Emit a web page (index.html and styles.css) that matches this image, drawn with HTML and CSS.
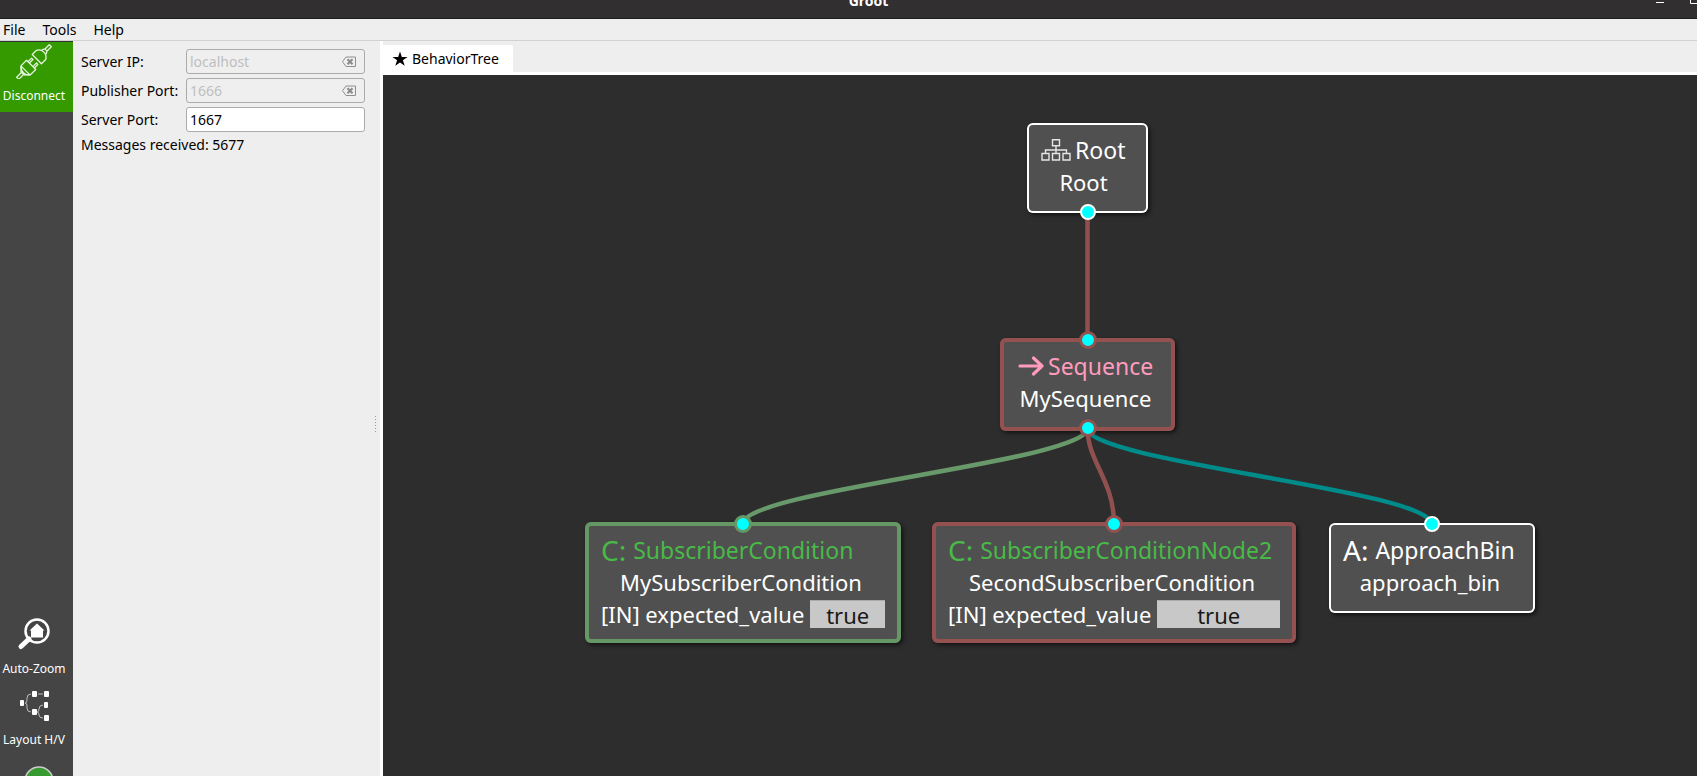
FILE: index.html
```html
<!DOCTYPE html>
<html lang="en">
<head>
<meta charset="utf-8">
<title>Groot</title>
<link rel="stylesheet" href="styles.css">
</head>
<body>
<div class="window">
  <header class="titlebar">
    <span class="titlebar-name">Groot</span>
    <svg class="window-controls" width="43" height="18" viewBox="0 0 43 18" fill="none" stroke="#fff"><path d="M2 2.500h8" /><path d="M36.500 0v3.500H43" /></svg>
  </header>
  <nav class="menubar">
    <button class="menu" type="button">File</button>
    <button class="menu" type="button">Tools</button>
    <button class="menu" type="button">Help</button>
  </nav>
  <div class="workspace">
    <aside class="toolbar">
      <button class="tool tool-active" type="button">
        <svg width="36" height="36" viewBox="0 0 36 36" fill="none" stroke="#e4f5dc" stroke-width="1.300" stroke-linejoin="round">
          <g transform="translate(18 19) rotate(-45)">
            <path d="M-23-1.500h7v3h-7z" /><path d="M-16-2.500l4-3v11l-4-3z" /><path d="M-12-6.500h8v13h-8q-3-2-3-6.500t3-6.500z" />
            <path d="M-4-4.500h5v2h-5M-4 2.500h5v2h-5" />
            <path d="M4-6.500h6q4 2 4 6.500t-4 6.500h-6z" /><path d="M14-3l3 1.500v3L14 3M17-1.500h6v3h-6z" />
          </g>
        </svg>
        <span>Disconnect</span>
      </button>
      <div class="toolbar-bottom">
        <button class="tool" type="button">
          <svg width="34" height="34" viewBox="0 0 34 34"><circle cx="20" cy="14" r="11.500" fill="none" stroke="#fff" stroke-width="2.500" /><path d="M12 22L4 29.500" stroke="#fff" stroke-width="5" stroke-linecap="round" /><path d="M20 6.500l7.500 7h-1.500v7H14v-7h-1.500z" fill="#fff" /></svg>
          <span>Auto-Zoom</span>
        </button>
        <button class="tool" type="button">
          <svg width="34" height="34" viewBox="0 0 34 34"><g fill="#fff"><rect x="3" y="12" width="4" height="6" rx="1" /><rect x="15" y="3" width="5" height="6" rx="1" /><rect x="27" y="3" width="5" height="6" rx="1" /><rect x="15" y="21" width="5" height="6" rx="1" /><rect x="27" y="14" width="4" height="6" rx="1" /><rect x="27" y="27" width="5" height="6" rx="1" /></g><path d="M14 6q-4 0-4 4v2q0 3-2 3q2 0 2 3v2q0 4 4 4M21 6h5M26 17q-4 0-4 4q0 3-2 3q2 0 2 3q0 3 4 3" fill="none" stroke="#bbb" /></svg>
          <span>Layout H/V</span>
        </button>
        <button class="tool tool-clipped" type="button" aria-label="Status">
          <svg width="30" height="10" viewBox="0 0 30 10"><circle cx="15" cy="15" r="14" fill="#379b31" stroke="#ccc" stroke-width="1.500" /></svg>
        </button>
      </div>
    </aside>
    <section class="side">
      <form class="settings">
        <label for="ip">Server IP:</label>
        <div class="field field-off"><input id="ip" value="localhost" disabled><svg width="16" height="12" viewBox="0 0 16 12"><path d="M5 1h9.500v9.500H5L1.500 5.700z" fill="none" stroke="#8f8f8f" /><path d="M6.500 3.200l5 5M11.500 3.200l-5 5" stroke="#8a8a8a" stroke-width="2" /></svg></div>
        <label for="pub">Publisher Port:</label>
        <div class="field field-off"><input id="pub" value="1666" disabled><svg width="16" height="12" viewBox="0 0 16 12"><path d="M5 1h9.500v9.500H5L1.500 5.700z" fill="none" stroke="#8f8f8f" /><path d="M6.500 3.200l5 5M11.500 3.200l-5 5" stroke="#8a8a8a" stroke-width="2" /></svg></div>
        <label for="port">Server Port:</label>
        <div class="field"><input id="port" value="1667"></div>
      </form>
      <p class="messages">Messages received: 5677</p>
      <div class="splitter"></div>
    </section>
    <main class="editor">
      <div class="tabs">
        <button class="tab" type="button"><svg width="16" height="16" viewBox="0 0 16 16"><path d="M8 .500l1.800 5.400h5.700l-4.600 3.400 1.800 5.500L8 11.400l-4.700 3.400 1.800-5.500L.500 5.900h5.700z" /></svg><span>BehaviorTree</span></button>
      </div>
      <div class="canvas">
        <svg class="edges" width="1314" height="701" viewBox="383 75 1314 701" fill="none" stroke-width="4.500">
          <path d="M1087.500 212V340" stroke="#915050" />
          <path d="M1087.500 428C1087.500 462 743 490 743 524" stroke="#68996a" />
          <path d="M1087.500 428C1087.500 462 1431 490 1431 524" stroke="#008b8b" />
          <path d="M1087.500 428C1087.500 462 1114 480 1114 524" stroke="#915050" />
        </svg>
        <article class="node node-plain node-root">
          <h2 class="node-title"><svg width="30" height="24" viewBox="0 0 30 24" fill="none" stroke="#e6e6e6" stroke-width="1.400"><path d="M11.500 1.700h7v6h-7zM1 15.500h7v6.500H1zM11.500 15.500h7v6.500h-7zM22 15.500h7v6.500h-7zM15 7.700v7.800M4.500 15.500v-3.500h21v3.500" /></svg><span>Root</span></h2>
          <p class="node-name">Root</p>
          <i class="port port-out"></i>
        </article>
        <article class="node node-sequence failed">
          <h2 class="node-title"><svg width="26" height="20" viewBox="0 0 26 20" fill="none" stroke="#ff9bbd" stroke-width="3.200" stroke-linecap="round" stroke-linejoin="round"><path d="M2 10h22M15.500 2l8.500 8-8.500 8" /></svg><span>Sequence</span></h2>
          <p class="node-name">MySequence</p>
          <i class="port port-in"></i><i class="port port-out"></i>
        </article>
        <article class="node node-first passed">
          <h2 class="node-title"><b>C:</b><span>SubscriberCondition</span></h2>
          <p class="node-name">MySubscriberCondition</p>
          <div class="param"><label for="v1">[IN] expected_value</label><input id="v1" value="true"></div>
          <i class="port port-in"></i>
        </article>
        <article class="node node-second failed">
          <h2 class="node-title"><b>C:</b><span>SubscriberConditionNode2</span></h2>
          <p class="node-name">SecondSubscriberCondition</p>
          <div class="param"><label for="v2">[IN] expected_value</label><input id="v2" value="true"></div>
          <i class="port port-in"></i>
        </article>
        <article class="node node-plain node-approach">
          <h2 class="node-title"><b>A:</b><span>ApproachBin</span></h2>
          <p class="node-name">approach_bin</p>
          <i class="port port-in"></i>
        </article>
      </div>
    </main>
  </div>
</div>
</body>
</html>
```
FILE: styles.css
```css
* { box-sizing: border-box; }
body { margin: 0; font-family: "Noto Sans", sans-serif; font-size: 14px; color: #000; background: #eee; }
button, input { font: inherit; color: inherit; }
button { border: 0; padding: 0; background: none; }
svg { display: block; flex: none; }
h2, p { margin: 0; font-weight: 400; }

.window { height: 100vh; display: flex; flex-direction: column; overflow: hidden; }
.titlebar { height: 19px; flex: none; display: flex; justify-content: flex-end; position: relative; background: #312f30; border-bottom: 1px solid #1c1c1c; }
.titlebar-name { position: absolute; left: 40px; right: 0; top: -9px; text-align: center; line-height: 20px; font-weight: 700; color: #fff; }
.menubar { height: 22px; flex: none; display: flex; gap: 17px; padding: 0 3px; border-bottom: 1px solid #d2d2d2; }
.menu { line-height: 20px; }
.workspace { flex: 1; min-height: 0; display: flex; }

.toolbar { width: 73px; flex: none; display: flex; flex-direction: column; justify-content: space-between; background: #454545; border-top: 1px solid #333; color: #fff; font-size: 12px; }
.tool { width: 100%; height: 71px; display: flex; flex-direction: column; align-items: center; gap: 10px; padding: 1px 5px 0 0; line-height: 16px; white-space: nowrap; }
.tool-active { height: 70px; gap: 9px; background: #349a00; }
.toolbar-bottom { flex: none; }
.tool-clipped { height: 18px; padding: 8px 0 0 4px; }

.side { width: 307px; flex: none; position: relative; padding: 8px 15px 0 8px; }
.settings { display: grid; grid-template-columns: 99px minmax(0, 1fr); column-gap: 6px; row-gap: 4px; align-items: center; white-space: nowrap; }
.field { height: 25px; display: flex; align-items: center; padding: 0 7px 0 3px; background: #fff; border: 1px solid #ababab; border-radius: 3px; }
.field input { flex: 1; width: 0; min-width: 0; border: 0; padding: 0; background: none; outline: 0; }
.field-off { background: #efefef; }
.field-off input { color: #bebebe; }
.messages { line-height: 20px; margin-top: 3px; }
.splitter { position: absolute; right: 4px; top: 375px; width: 1px; height: 17px; background: repeating-linear-gradient(#999 0 1px, transparent 1px 3px); }

.editor { flex: 1; min-width: 0; display: flex; flex-direction: column; border-left: 3px solid #fff; }
.tabs { height: 34px; flex: none; display: flex; padding-top: 4px; background: #eee; border-bottom: 3px solid #fff; }
.tab { display: flex; align-items: center; gap: 4px; padding: 0 14px 0 9px; background: #fff; border-radius: 0 2px 0 0; }
.canvas { flex: 1; position: relative; overflow: hidden; background: #2d2d2d; color: #fff; font-size: 22px; }
.edges { position: absolute; left: 0; top: 0; }

.node { position: absolute; --edge: #fff; --line: 2px; padding: 12px 14px 13px; background: #505050; border-radius: 6px; box-shadow: inset 0 0 0 var(--line) var(--edge), 2px 2px 4px #0009; line-height: 32px; white-space: nowrap; }
.node-plain { padding-top: 11px; padding-bottom: 15px; }
.failed { --edge: #955050; --line: 4px; }
.passed { --edge: #659865; --line: 4px; }
.node-root { left: 644px; top: 48px; width: 121px; }
.node-sequence { left: 617px; top: 263px; width: 175px; padding-bottom: 17px; }
.node-first { left: 202px; top: 447px; width: 316px; }
.node-second { left: 549px; top: 447px; width: 364px; }
.node-approach { left: 946px; top: 448px; width: 206px; }
.node-title { height: 32px; display: flex; align-items: center; gap: 7px; font-size: 23px; }
.node-root .node-title, .node-sequence .node-title { gap: 4px; }
.node-title b { font-size: 28px; font-weight: 400; }
.node-sequence .node-title { color: #ff9bbd; padding-left: 4px; }
.passed .node-title, .node-second .node-title { color: #48ba48; padding-left: 2px; }
.node-name { text-align: center; padding-right: 4px; }
.node-root .node-name { padding-right: 8px; }
.param { display: flex; align-items: center; gap: 6px; padding: 0 2px; }
.param input { flex: 1; width: 0; min-width: 0; height: 28px; padding: 0; border: 0; border-top: 1px solid #aaa; background: #c8c8c8; color: #191919; text-align: center; }
.port { position: absolute; left: 50%; width: 16px; height: 16px; margin-left: -8px; border: 2px solid var(--edge); border-radius: 50%; background: #0ff; }
.failed .port, .passed .port { width: 18px; height: 18px; margin-left: -9px; border-width: 3px; }
.port-in { top: -7px; }
.port-out { bottom: -7px; }
.failed .port-out { bottom: -6px; }
```
